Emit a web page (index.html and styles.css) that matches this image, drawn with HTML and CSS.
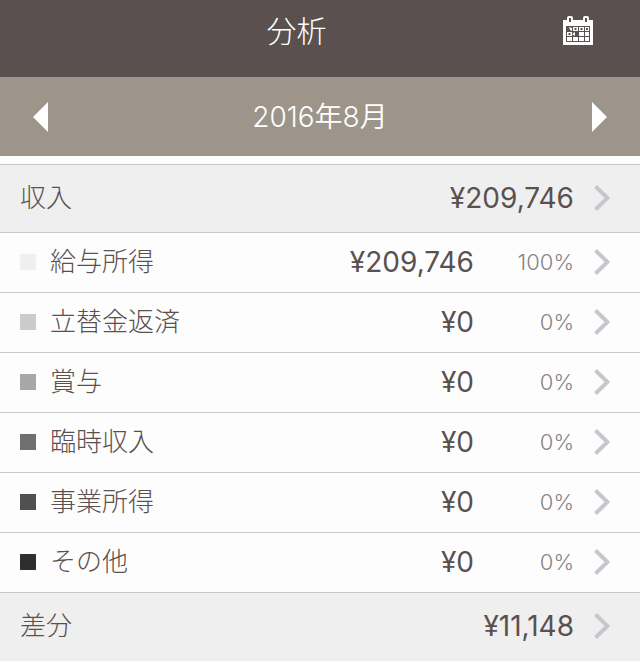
FILE: index.html
```html
<!DOCTYPE html>
<html lang="ja">
<head>
    <meta charset="UTF-8">
    <meta name="viewport" content="width=device-width, initial-scale=1.0">
    <title>分析</title>
    <link rel="stylesheet" href="styles.css">
</head>
<body>
    <svg class="sprite" aria-hidden="true">
        <symbol id="chevron" viewBox="0 0 16 26">
            <path d="M1.5 1.5L13.5 13L1.5 24.5" fill="none" stroke="#c7c6cd" stroke-width="4"/>
        </symbol>
    </svg>

    <header class="header">
        <h1 class="title">分析</h1>
        <button type="button" class="calendar-button" aria-label="カレンダー">
            <svg width="30" height="30" viewBox="0 0 30 30">
                <path fill="#fff" d="M0 4H4V2Q4 0 6 0H8Q10 0 10 2V4H20V2Q20 0 22 0H24Q26 0 26 2V4H30V29H0Z"/>
                <path fill="#5a504f" d="M6 2H8V6H6ZM22 2H24V6H22ZM3 10H27V26H3Z"/>
                <path fill="#fff" d="M6 11L9 12V15L7 14ZM10 11H15V15H10ZM16 11H21V15H16ZM22 11H26V15H22ZM4 16H9V20H4ZM9 18L12 16V20ZM16 16H21V20H16ZM22 16H26V20H22ZM4 21H9V25H4ZM10 21H15V25H10ZM16 21H21V25H16ZM22 21H26V25H22Z"/>
                <path fill="#5a504f" d="M11.500 12H13.500V14H11.500ZM17.500 12H19.500V14H17.500ZM23 12H25V14H23ZM5.500 17H7.500V19H5.500Z"/>
            </svg>
        </button>
    </header>

    <nav class="month-bar">
        <button type="button" class="month-button" aria-label="前の月">
            <svg width="15" height="30" viewBox="0 0 15 30"><path d="M15 0V30L0 15Z" fill="#fff"/></svg>
        </button>
        <h2 class="month">2016年8月</h2>
        <button type="button" class="month-button" aria-label="次の月">
            <svg width="15" height="30" viewBox="0 0 15 30"><path d="M0 0V30L15 15Z" fill="#fff"/></svg>
        </button>
    </nav>

    <main class="report">
        <a href="#" class="row summary">
            <span class="name">収入</span>
            <span class="amount">¥209,746</span>
            <svg class="chevron"><use href="#chevron"/></svg>
        </a>
        <a href="#" class="row">
            <span class="swatch salary"></span>
            <span class="name">給与所得</span>
            <span class="amount">¥209,746</span>
            <span class="percent">100%</span>
            <svg class="chevron"><use href="#chevron"/></svg>
        </a>
        <a href="#" class="row">
            <span class="swatch refund"></span>
            <span class="name">立替金返済</span>
            <span class="amount">¥0</span>
            <span class="percent">0%</span>
            <svg class="chevron"><use href="#chevron"/></svg>
        </a>
        <a href="#" class="row">
            <span class="swatch bonus"></span>
            <span class="name">賞与</span>
            <span class="amount">¥0</span>
            <span class="percent">0%</span>
            <svg class="chevron"><use href="#chevron"/></svg>
        </a>
        <a href="#" class="row">
            <span class="swatch extra"></span>
            <span class="name">臨時収入</span>
            <span class="amount">¥0</span>
            <span class="percent">0%</span>
            <svg class="chevron"><use href="#chevron"/></svg>
        </a>
        <a href="#" class="row">
            <span class="swatch business"></span>
            <span class="name">事業所得</span>
            <span class="amount">¥0</span>
            <span class="percent">0%</span>
            <svg class="chevron"><use href="#chevron"/></svg>
        </a>
        <a href="#" class="row">
            <span class="swatch other"></span>
            <span class="name">その他</span>
            <span class="amount">¥0</span>
            <span class="percent">0%</span>
            <svg class="chevron"><use href="#chevron"/></svg>
        </a>
        <a href="#" class="row summary">
            <span class="name">差分</span>
            <span class="amount">¥11,148</span>
            <svg class="chevron"><use href="#chevron"/></svg>
        </a>
    </main>
</body>
</html>
```

FILE: styles.css
```css
* {
    box-sizing: border-box;
}
body {
    margin: 0;
    background-color: #fdfdfd;
    color: #5a504f;
    font-family: Inter, "Noto Sans CJK JP", sans-serif;
    font-weight: 300;
}
button {
    display: flex;
    padding: 0;
    border: 0;
    background: none;
    cursor: pointer;
}
.sprite {
    display: none;
}
.header {
    display: grid;
    grid-template-columns: 1fr auto 1fr;
    align-items: center;
    height: 77px;
    padding: 0 47px 16px 0;
    background-color: #5a504f;
    color: #fff;
}
.title {
    grid-column: 2;
    margin: 0;
    font-size: 30px;
    font-weight: 300;
    line-height: 40px;
}
.calendar-button {
    justify-self: end;
}
.month-bar {
    display: flex;
    justify-content: space-between;
    align-items: center;
    height: 79px;
    padding: 0 33px;
    background-color: #9d9589;
    color: #fff;
}
.month {
    margin: 0;
    font-size: 28px;
    font-weight: 350;
    line-height: 40px;
}
.report {
    margin-top: 8px;
    border-top: 1px solid #c8c7cc;
}
.row {
    display: flex;
    align-items: center;
    height: 60px;
    padding: 0 30px 2px 20px;
    border-bottom: 1px solid #c8c7cc;
    color: inherit;
    text-decoration: none;
}
.summary {
    height: 68px;
    background-color: #efefef;
}
.summary:last-child {
    height: 69px;
    border-bottom-color: #fdfdfd;
}
.swatch {
    width: 16px;
    height: 16px;
    margin-right: 14px;
}
.salary {
    background-color: #efefef;
}
.refund {
    background-color: #cbcbcb;
}
.bonus {
    background-color: #a7a7a7;
}
.extra {
    background-color: #6f6f6f;
}
.business {
    background-color: #505050;
}
.other {
    background-color: #2e2e2e;
}
.name {
    flex: 1;
    font-size: 26px;
    line-height: 36px;
}
.amount {
    font-size: 28px;
    font-weight: 400;
    line-height: 36px;
}
.percent {
    width: 100px;
    color: #858585;
    font-size: 22px;
    line-height: 36px;
    text-align: right;
}
.chevron {
    width: 16px;
    height: 26px;
    margin-left: 20px;
}
```
